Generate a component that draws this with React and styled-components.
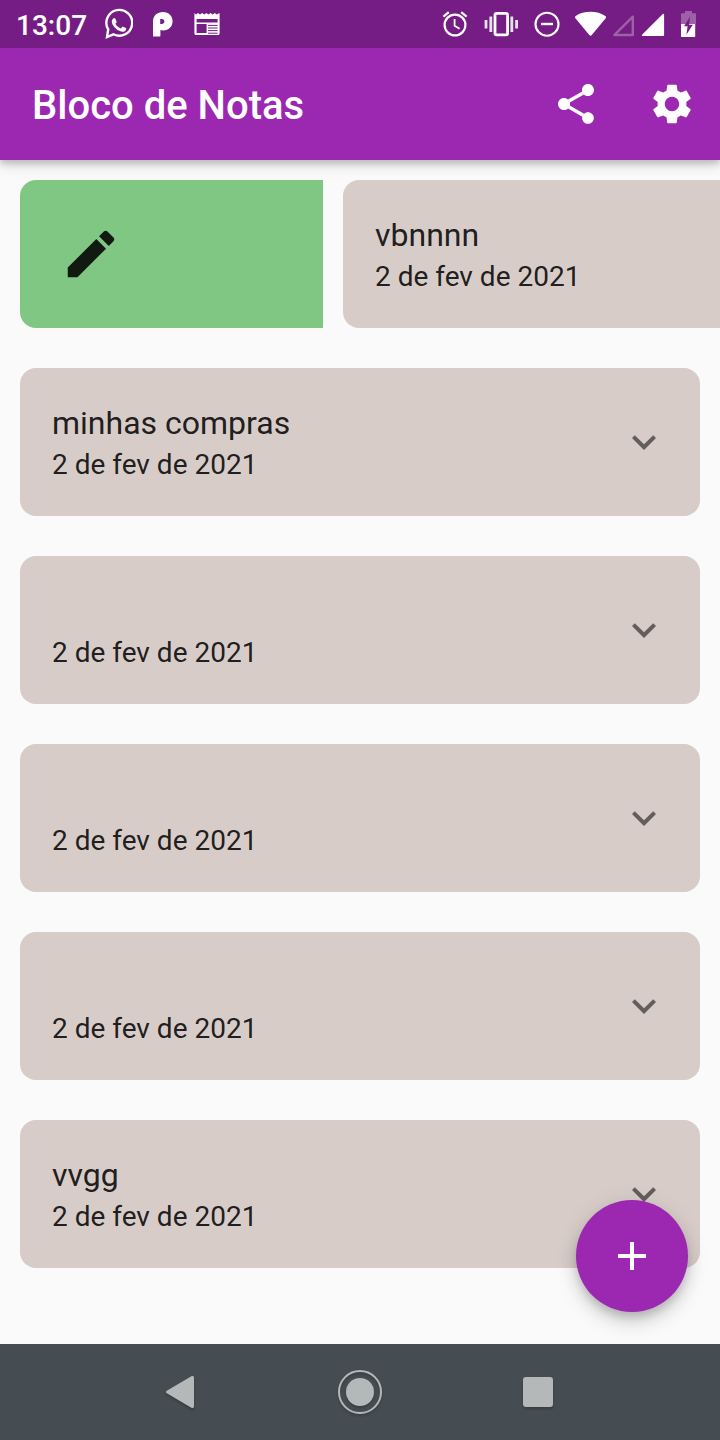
import React from "react";
import styled, { createGlobalStyle } from "styled-components";

const GlobalStyle = createGlobalStyle`
  * { box-sizing: border-box; }
  body {
    margin: 0;
    background: #fafafa;
    color: rgba(0, 0, 0, 0.87);
    font-family: Roboto, "Liberation Sans", sans-serif;
  }
  button {
    padding: 0;
    border: 0;
    background: none;
    color: inherit;
    font: inherit;
    cursor: pointer;
  }
  svg { display: block; flex: none; }
`;

const Screen = styled.div`
  display: flex;
  flex-direction: column;
  min-height: 100vh;
  overflow-x: hidden;
`;

const StatusBar = styled.div`
  position: relative;
  z-index: 2;
  display: flex;
  justify-content: space-between;
  height: 48px;
  padding: 0 16px;
  background: #751d84;
  color: #fff;
`;

const Notifications = styled.div`
  display: flex;
  align-items: center;
  gap: 18px;
`;

const Clock = styled.time`
  padding-top: 4px;
  font-size: 28px;
  font-weight: 500;
  line-height: 32px;
`;

const SystemIcons = styled.div`
  display: flex;
`;

const AppBar = styled.header`
  position: relative;
  z-index: 1;
  display: flex;
  align-items: center;
  height: 112px;
  padding-left: 32px;
  background: #9c27b0;
  color: #fff;
  box-shadow: 0 4px 6px rgba(0, 0, 0, 0.16), 0 4px 14px rgba(0, 0, 0, 0.14);
`;

const Title = styled.h1`
  flex: 1;
  margin: 0;
  padding-top: 4px;
  font-size: 40px;
  font-weight: 500;
  line-height: 48px;
`;

const BarButton = styled.button`
  display: grid;
  place-items: center;
  width: 96px;
  height: 96px;
`;

const NoteList = styled.ul`
  flex: 1;
  display: flex;
  flex-direction: column;
  gap: 40px;
  margin: 0;
  padding: 20px 0 60px;
  list-style: none;
`;

const NoteRow = styled.li`
  display: flex;
  gap: 20px;
  padding-left: 20px;
  padding-right: ${(p) => (p.$open ? "0" : "20px")};
  overflow: hidden;
`;

const EditAction = styled.button`
  flex: 0 0 303px;
  display: flex;
  align-items: center;
  padding-left: 40px;
  border-radius: 16px 0 0 16px;
  background: #81c784;
`;

const Card = styled.article`
  flex: 1 0 ${(p) => (p.$open ? "100%" : "0")};
  display: flex;
  align-items: center;
  height: 148px;
  padding: 0 32px;
  border-radius: 16px;
  background: #d7ccc8;
`;

const NoteText = styled.div`
  flex: 1;
  min-width: 0;
`;

const NoteTitle = styled.h2`
  height: 46px;
  margin: 0;
  font-size: 32px;
  font-weight: 400;
  line-height: 46px;
`;

const NoteDate = styled.p`
  margin: 0;
  font-size: 28px;
  line-height: 38px;
`;

const ExpandButton = styled.button`
  color: rgba(0, 0, 0, 0.54);
`;

const AddButton = styled.button`
  position: fixed;
  right: 32px;
  bottom: 128px;
  z-index: 2;
  display: grid;
  place-items: center;
  width: 112px;
  height: 112px;
  border-radius: 50%;
  background: #9c27b0;
  color: #fff;
  box-shadow: 0 6px 10px -2px rgba(0, 0, 0, 0.16), 0 10px 20px rgba(0, 0, 0, 0.16),
    0 2px 24px rgba(0, 0, 0, 0.08);
`;

const NavBar = styled.nav`
  position: relative;
  z-index: 3;
  display: flex;
  height: 96px;
  padding: 0 90px;
  background: #454d52;
  color: #b4b8b9;
`;

const NavButton = styled.button`
  flex: 1;
  display: grid;
  place-items: center;
  filter: drop-shadow(0 2px 1px rgba(0, 0, 0, 0.2));
`;

const MaterialIcon = ({ path, size = 48 }) => (
  <svg width={size} height={size} viewBox="0 0 24 24" fill="currentColor" aria-hidden="true">
    <path d={path} />
  </svg>
);

const StatusIcon = ({ width, children }) => (
  <svg width={width} height="48" viewBox={`0 0 ${width} 48`} fill="none" aria-hidden="true">
    {children}
  </svg>
);

const icons = {
  share:
    "M18 16.08c-.76 0-1.44.3-1.96.77L8.91 12.7c.05-.23.09-.46.09-.7s-.04-.47-.09-.7l7.05-4.11c.54.5 1.25.81 2.04.81 1.66 0 3-1.34 3-3s-1.34-3-3-3-3 1.34-3 3c0 .24.04.47.09.7L8.04 9.81C7.5 9.31 6.79 9 6 9c-1.66 0-3 1.34-3 3s1.34 3 3 3c.79 0 1.5-.31 2.04-.81l7.12 4.16c-.05.21-.08.43-.08.65 0 1.61 1.31 2.92 2.92 2.92s2.92-1.31 2.92-2.92-1.31-2.92-2.92-2.92z",
  settings:
    "M19.14 12.94c.04-.3.06-.61.06-.94 0-.32-.02-.64-.07-.94l2.03-1.58c.18-.14.23-.41.12-.61l-1.92-3.32c-.12-.22-.37-.29-.59-.22l-2.39.96c-.5-.38-1.03-.7-1.62-.94l-.36-2.54c-.04-.24-.24-.41-.48-.41h-3.84c-.24 0-.43.17-.47.41l-.36 2.54c-.59.24-1.13.57-1.62.94l-2.39-.96c-.22-.08-.47 0-.59.22L2.74 8.87c-.12.21-.08.47.12.61l2.03 1.58c-.05.3-.09.63-.09.94s.02.64.07.94l-2.03 1.58c-.18.14-.23.41-.12.61l1.92 3.32c.12.22.37.29.59.22l2.39-.96c.5.38 1.03.7 1.62.94l.36 2.54c.05.24.24.41.48.41h3.84c.24 0 .44-.17.47-.41l.36-2.54c.59-.24 1.13-.56 1.62-.94l2.39.96c.22.08.47 0 .59-.22l1.92-3.32c.12-.22.07-.47-.12-.61l-2.01-1.58zM12 15.6c-1.98 0-3.6-1.62-3.6-3.6s1.62-3.6 3.6-3.6 3.6 1.62 3.6 3.6-1.62 3.6-3.6 3.6z",
  edit: "M3 17.25V21h3.75L17.81 9.94l-3.75-3.75L3 17.25zM20.71 7.04c.39-.39.39-1.02 0-1.41l-2.34-2.34c-.39-.39-1.02-.39-1.41 0l-1.83 1.83 3.75 3.75 1.83-1.83z",
  expand: "M16.59 8.59L12 13.17 7.41 8.59 6 10l6 6 6-6z",
  add: "M19 13h-6v6h-2v-6H5v-2h6V5h2v6h6v2z",
};

const notes = [
  { id: 1, title: "vbnnnn", date: "2 de fev de 2021", open: true },
  { id: 2, title: "minhas compras", date: "2 de fev de 2021" },
  { id: 3, title: "", date: "2 de fev de 2021" },
  { id: 4, title: "", date: "2 de fev de 2021" },
  { id: 5, title: "", date: "2 de fev de 2021" },
  { id: 6, title: "vvgg", date: "2 de fev de 2021" },
];

function Note({ note }) {
  return (
    <NoteRow $open={note.open}>
      {note.open && (
        <EditAction aria-label="Editar">
          <MaterialIcon path={icons.edit} size={62} />
        </EditAction>
      )}
      <Card $open={note.open}>
        <NoteText>
          <NoteTitle>{note.title}</NoteTitle>
          <NoteDate>{note.date}</NoteDate>
        </NoteText>
        {!note.open && (
          <ExpandButton aria-label="Expandir">
            <MaterialIcon path={icons.expand} />
          </ExpandButton>
        )}
      </Card>
    </NoteRow>
  );
}

function NotificationIcons() {
  return (
    <>
      <StatusIcon width={28}>
        <path
          d="M8.400 34.300L2 37.100L3.200 29.400A12.900 12.900 0 1 1 8.400 34.300z"
          stroke="#fff"
          strokeWidth="2.4"
        />
        <path
          transform="translate(-.3 8.600) scale(.064)"
          d="M325.100 300.500c-5.500-2.800-32.800-16.200-37.900-18-5.100-1.900-8.800-2.800-12.500 2.800-3.700 5.600-14.300 18-17.600 21.800-3.200 3.700-6.500 4.200-12 1.400-32.600-16.300-54-29.100-75.500-66-5.700-9.800 5.700-9.100 16.300-30.300 1.800-3.700.9-6.900-.5-9.700-1.400-2.800-12.500-30.100-17.100-41.200-4.500-10.800-9.100-9.300-12.500-9.500-3.200-.2-6.900-.2-10.600-.2-3.700 0-9.700 1.400-14.800 6.900-5.100 5.600-19.400 19-19.400 46.300 0 27.300 19.900 53.700 22.600 57.400 2.800 3.700 39.100 59.700 94.800 83.800 35.200 15.200 49 16.500 66.600 13.900 10.700-1.600 32.800-13.400 37.400-26.400 4.600-13 4.600-24.100 3.200-26.400-1.300-2.500-5-3.900-10.500-6.600z"
          fill="#fff"
        />
      </StatusIcon>
      <StatusIcon width={24}>
        <path
          fillRule="evenodd"
          d="M2 36.600V21.500C2 15.700 6.200 12 12 12s9.600 4 9.600 9.200-4 9.200-9.400 9.200c-1 0-2-.1-2.800-.4v5.400c0 .8-.4 1.200-1.200 1.200zM9.200 19v5h1.600c1.600 0 2.600-1 2.600-2.500S12.400 19 10.800 19z"
          fill="#fff"
        />
      </StatusIcon>
      <StatusIcon width={28}>
        <path
          fillRule="evenodd"
          d="M1.400 13l1.600 1.600L5 13l2 1.600L9.200 13l2 1.600 2.200-1.600 2 1.600 2.200-1.600 2 1.600 2.200-1.600 2 1.600L26.600 13v20.600c0 .9-.6 1.500-1.500 1.500H2.900c-.9 0-1.500-.6-1.500-1.500zM3.600 19v3.600h21V19zM3.600 24v9h10v-9z"
          fill="#fff"
        />
        <path d="M15 25.400h9.600M15 28h9.600M15 30.600h9.600M15 33.200h9.600" stroke="#751d84" strokeWidth="1" />
      </StatusIcon>
    </>
  );
}

function SystemStatus() {
  return (
    <SystemIcons>
      <StatusIcon width={42}>
        <g stroke="#fff" strokeWidth="2.2">
          <circle cx="21" cy="25" r="10.4" />
          <path d="M20.6 19v6.800l5 3" strokeWidth="1.800" />
          <path d="M9.400 16.600l5.400-4.500M32.600 16.600l-5.400-4.500" />
        </g>
      </StatusIcon>
      <StatusIcon width={50}>
        <rect x="19" y="13.400" width="12.600" height="21.400" rx="1.600" stroke="#fff" strokeWidth="2.800" />
        <path
          d="M10 20v8.400M40.600 20v8.400M14.800 16.400v15.600M35.800 16.400v15.600"
          stroke="#fff"
          strokeOpacity="0.85"
          strokeWidth="2.800"
        />
      </StatusIcon>
      <StatusIcon width={42}>
        <circle cx="21" cy="24.200" r="11.500" stroke="#fff" strokeWidth="2.100" />
        <path d="M15 24h12" stroke="#fff" strokeWidth="2.400" />
      </StatusIcon>
      <StatusIcon width={42}>
        <path
          d="M7.400 18.200C6.800 17.400 7 16.600 7.700 16.100 11.800 13.100 17 11.800 22.600 11.800s10.700 1.400 14.800 4.300c.7.5.9 1.300.3 2.100L23.800 35c-.8.9-1.700.9-2.500 0z"
          fill="#fff"
        />
      </StatusIcon>
      <StatusIcon width={28}>
        <path d="M4.400 35h18.400V16.600z" stroke="#fff" strokeOpacity="0.3" strokeWidth="2.400" strokeLinejoin="round" />
      </StatusIcon>
      <StatusIcon width={30}>
        <path d="M4.600 36h20.600c.6 0 .9-.3.9-.9V14.600c0-.8-.8-1-1.300-.5L4 34.800c-.5.5-.2 1.200.6 1.200z" fill="#fff" />
      </StatusIcon>
      <StatusIcon width={36}>
        <path d="M13 24V14.200c0-.6.4-1 1-1h3V11h7v2.200h3c.6 0 1 .4 1 1V24z" fill="#fff" fillOpacity="0.3" />
        <path d="M13 24h14.200v12c0 .6-.4 1-1 1H14c-.6 0-1-.4-1-1z" fill="#fff" />
        <path d="M22.200 16.600L16 26.200h3.600l-1.200 8.600 6.400-10h-3.800z" fill="#751d84" />
      </StatusIcon>
    </SystemIcons>
  );
}

export default function App() {
  return (
    <Screen>
      <GlobalStyle />
      <StatusBar>
        <Notifications>
          <Clock>13:07</Clock>
          <NotificationIcons />
        </Notifications>
        <SystemStatus />
      </StatusBar>

      <AppBar>
        <Title>Bloco de Notas</Title>
        <BarButton aria-label="Compartilhar">
          <MaterialIcon path={icons.share} />
        </BarButton>
        <BarButton aria-label="Configurações">
          <MaterialIcon path={icons.settings} />
        </BarButton>
      </AppBar>

      <NoteList>
        {notes.map((note) => (
          <Note key={note.id} note={note} />
        ))}
      </NoteList>

      <AddButton aria-label="Nova nota">
        <MaterialIcon path={icons.add} />
      </AddButton>

      <NavBar>
        <NavButton aria-label="Voltar">
          <svg width="28" height="32" viewBox="0 0 28 32" fill="currentColor" aria-hidden="true">
            <path d="M.8 14.700L25.400.3C26.800-.4 28 .3 28 1.800v28.400c0 1.500-1.200 2.200-2.600 1.500L.8 17.300c-1.100-.7-1.100-1.900 0-2.600z" />
          </svg>
        </NavButton>
        <NavButton aria-label="Início">
          <svg width="44" height="44" viewBox="0 0 44 44" aria-hidden="true">
            <circle cx="22" cy="22" r="21" fill="none" stroke="currentColor" strokeWidth="2" />
            <circle cx="22" cy="22" r="14" fill="currentColor" />
          </svg>
        </NavButton>
        <NavButton aria-label="Recentes">
          <svg width="34" height="30" viewBox="0 0 34 30" aria-hidden="true">
            <rect width="30" height="30" rx="3" fill="currentColor" />
          </svg>
        </NavButton>
      </NavBar>
    </Screen>
  );
}
